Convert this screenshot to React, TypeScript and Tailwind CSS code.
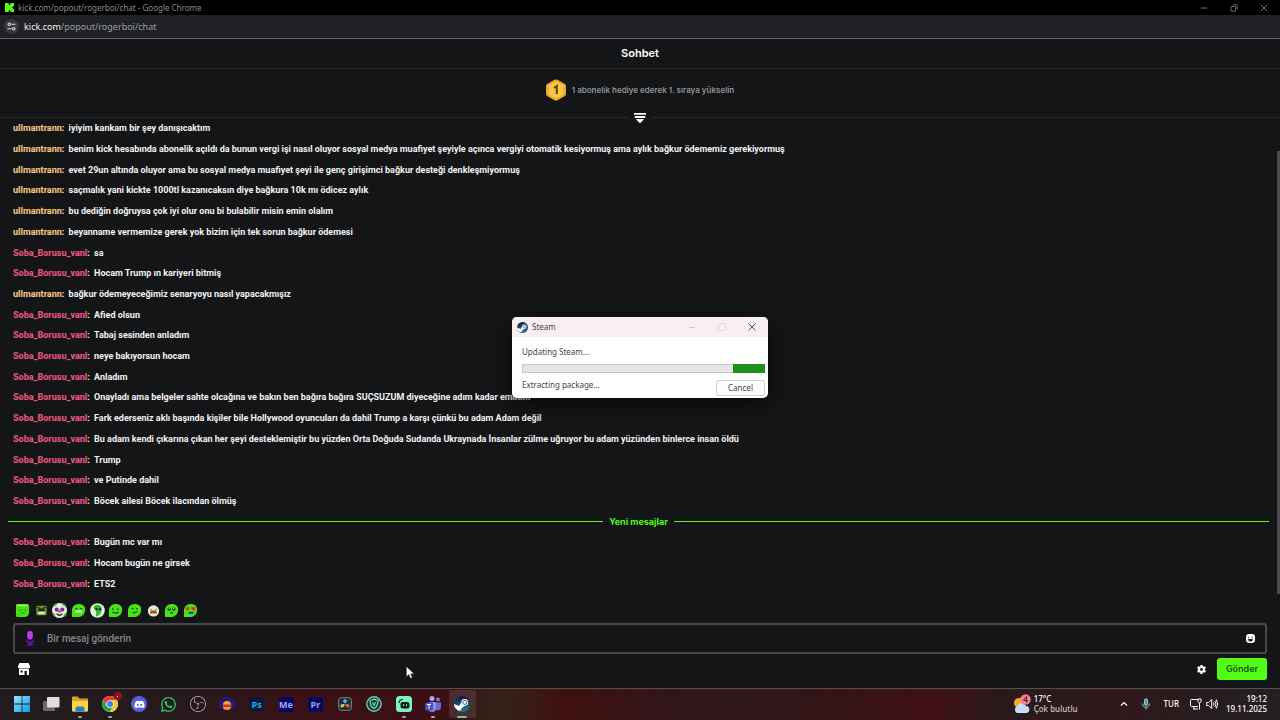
import type { ReactNode } from "react";
import { FaDiscord, FaWhatsapp } from "react-icons/fa";
import { SiObsstudio } from "react-icons/si";

type Message = { user: "ullmantrann" | "Soba_Borusu_vanl"; text: string };

const U = "ullmantrann" as const;
const S = "Soba_Borusu_vanl" as const;

const oldMessages: Message[] = [
  { user: U, text: "iyiyim kankam bir şey danışıcaktım" },
  { user: U, text: "benim kick hesabında abonelik açıldı da bunun vergi işi nasıl oluyor sosyal medya muafiyet şeyiyle açınca vergiyi otomatik kesiyormuş ama aylık bağkur ödememiz gerekiyormuş" },
  { user: U, text: "evet 29un altında oluyor ama bu sosyal medya muafiyet şeyi ile genç girişimci bağkur desteği denkleşmiyormuş" },
  { user: U, text: "saçmalık yani kickte 1000tl kazanıcaksın diye bağkura 10k mı ödicez aylık" },
  { user: U, text: "bu dediğin doğruysa çok iyi olur onu bi bulabilir misin emin olalım" },
  { user: U, text: "beyanname vermemize gerek yok bizim için tek sorun bağkur ödemesi" },
  { user: S, text: "sa" },
  { user: S, text: "Hocam Trump ın kariyeri bitmiş" },
  { user: U, text: "bağkur ödemeyeceğimiz senaryoyu nasıl yapacakmışız" },
  { user: S, text: "Afied olsun" },
  { user: S, text: "Tabaj sesinden anladım" },
  { user: S, text: "neye bakıyorsun hocam" },
  { user: S, text: "Anladım" },
  { user: S, text: "Onayladı ama belgeler sahte olcağına ve bakın ben bağıra bağıra SUÇSUZUM diyeceğine adım kadar eminim" },
  { user: S, text: "Fark ederseniz aklı başında kişiler bile Hollywood oyuncuları da dahil Trump a karşı çünkü bu adam Adam değil" },
  { user: S, text: "Bu adam kendi çıkarına çıkan her şeyi desteklemiştir bu yüzden Orta Doğuda Sudanda Ukraynada İnsanlar zülme uğruyor bu adam yüzünden binlerce insan öldü" },
  { user: S, text: "Trump" },
  { user: S, text: "ve Putinde dahil" },
  { user: S, text: "Böcek ailesi Böcek ilacından ölmüş" },
];

const newMessages: Message[] = [
  { user: S, text: "Bugün mc var mı" },
  { user: S, text: "Hocam bugün ne girsek" },
  { user: S, text: "ETS2" },
];

function ChatRow({ user, text }: Message) {
  return (
    <li className="flex flex-1 items-center px-[13px] whitespace-nowrap">
      <p>
        <span className={user === U ? "font-extrabold text-[#f2c27c]" : "font-extrabold text-[#e9557f]"}>{user}</span>
        <span className="mr-[2px] font-bold">: </span>
        {text}
      </p>
    </li>
  );
}

function WindowButtons() {
  return (
    <div className="flex items-center text-[#8b8b8b]">
      <button aria-label="Minimize" className="flex w-[30px] justify-center">
        <svg viewBox="0 0 10 10" className="size-2" stroke="currentColor" fill="none"><path d="M1 5h8" /></svg>
      </button>
      <button aria-label="Restore" className="flex w-[30px] justify-center">
        <svg viewBox="0 0 10 10" className="size-2" stroke="currentColor" fill="none"><rect x="1" y="3" width="6" height="6" rx="1" /><path d="M3.500 1H8q1 0 1 1v4.500" /></svg>
      </button>
      <button aria-label="Close" className="flex w-[30px] justify-center">
        <svg viewBox="0 0 10 10" className="size-2" stroke="currentColor" fill="none"><path d="M1 1l8 8M9 1l-8 8" /></svg>
      </button>
    </div>
  );
}

const face = "M3 1h10q2 0 2 2v6.500q0 5.500-5.500 5.500H3q-2 0-2-2V3q0-2 2-2z";
const bubble = "M8 1c5 0 7.500 2.500 7 7S11.500 15 7 15H1V8C1 4 4 1 8 1z";

const emotes: { name: string; art: ReactNode }[] = [
  { name: "Sleepy", art: <><path d={face} fill="#4be01c" /><path d="M1.500 2.500h12" stroke="#9af45c" strokeWidth="1.500" /><path d="M4 7.500h3M9 7.500h3M6 10.500h4" stroke="#2fa01f" strokeWidth="1.200" /></> },
  { name: "Frog", art: <><rect x="2.500" y="3" width="11" height="10" rx="1.500" fill="#6c9b32" /><path d="M3.500 4.500l4 2M12.500 4.500l-4 2" stroke="#1c2b12" strokeWidth="1.500" /><rect x="4.500" y="6.500" width="7" height="2" fill="#17220f" /><rect x="4.500" y="9.500" width="7" height="2.500" fill="#d4e5b1" /></> },
  { name: "Clown", art: <><circle cx="8" cy="8" r="8" fill="#e3efe2" /><path d="M2 3l3-2M14 3l-3-2M1 11l2 3M15 11l-2 3" stroke="#41c52b" strokeWidth="2" /><circle cx="5" cy="7" r="2.200" fill="#7b2bae" /><circle cx="11" cy="7" r="2.200" fill="#7b2bae" /><circle cx="8" cy="9" r="1.500" fill="#e33b4e" /><path d="M5 11.500q3 3 6 0" stroke="#222" strokeWidth="1.500" fill="none" /></> },
  { name: "Grin", art: <><path d={bubble} fill="#4be01c" /><path d="M4.500 6h2.500M9.500 6H12" stroke="#125e10" strokeWidth="1.200" /><path d="M4.500 9h7" stroke="#d9ffd0" strokeWidth="2" /></> },
  { name: "Scream", art: <><circle cx="8" cy="8" r="7.800" fill="#e2f0df" /><path d="M4.500 3c5-3 9 1 8 5s-4 6.500-6 6c-1-1 1-3 0-5s-4-3-2-6z" fill="#31b923" /><circle cx="7" cy="6.500" r="1.300" fill="#123" /><circle cx="10.500" cy="6.500" r="1.300" fill="#123" /></> },
  { name: "Smile", art: <><path d={bubble} fill="#4be01c" /><path d="M5 5.500v2M10.500 5.500v2M4.500 9.500q3.500 2.500 7 0" stroke="#125e10" strokeWidth="1.300" fill="none" /></> },
  { name: "Smirk", art: <><path d={bubble} fill="#4be01c" /><path d="M5 5.500l2 1M9.500 6h2M6 10q3 1 5-1" stroke="#125e10" strokeWidth="1.300" fill="none" /></> },
  { name: "Mad", art: <><circle cx="8" cy="8.500" r="6" fill="#e9efd0" /><path d="M4.500 6.500l2 1M11.500 6.500l-2 1" stroke="#6d8a3a" /><rect x="4.500" y="8" width="7" height="4" rx="1.500" fill="#b34a30" /><path d="M5.500 11.800h5" stroke="#fff" /></> },
  { name: "Pleading", art: <><path d={bubble} fill="#4be01c" /><circle cx="5.500" cy="6.500" r="1.800" fill="#0d3b0c" /><circle cx="10.500" cy="6.500" r="1.800" fill="#0d3b0c" /><circle cx="5.500" cy="6" r=".6" fill="#fff" /><circle cx="10.500" cy="6" r=".6" fill="#fff" /><path d="M6.500 11q1.500-1.500 3 0" stroke="#125e10" strokeWidth="1.200" fill="none" /></> },
  { name: "Love", art: <><path d={bubble} fill="#4be01c" /><path d="M2.500 4.500h4.500v2L5 8.500 2.500 6.500zM9 4.500h4.500v2L11 8.500 9 6.500z" fill="#e3342b" /><rect x="6" y="9.500" width="5" height="2" fill="#173e12" /><path d="M7.500 11.500h3v2q-1.500 1.500-3 0z" fill="#49b9e8" /></> },
];

function SteamLogo({ id, className }: { id: string; className: string }) {
  return (
    <svg viewBox="0 0 20 20" className={className}>
      <defs>
        <linearGradient id={id} x1="0" y1="0" x2="0" y2="1"><stop stopColor="#111b3a" /><stop offset="1" stopColor="#1c7fa6" /></linearGradient>
        <clipPath id={`${id}-clip`}><circle cx="10" cy="10" r="10" /></clipPath>
      </defs>
      <circle cx="10" cy="10" r="10" fill={`url(#${id})`} />
      <g clipPath={`url(#${id}-clip)`}>
        <path d="M-1 9.500l7.200 3 3-4.300a4.200 4.200 0 1 1 4.300 4.100l-4 3a3.200 3.200 0 0 1-6.200.9L-1 14z" fill="#fff" />
      </g>
      <circle cx="13.400" cy="8" r="2.500" fill="none" stroke="#17345a" strokeWidth="1" />
    </svg>
  );
}

function SteamDialog() {
  return (
    <section role="dialog" aria-label="Steam" className="absolute top-[317px] left-1/2 w-64 -translate-x-1/2 overflow-hidden rounded-[5px] bg-white font-['Noto_Sans','Open_Sans',sans-serif] text-[8px] leading-3 text-[#444] shadow-[0_6px_22px_rgba(0,0,0,0.6)]">
      <header className="flex h-5 items-center justify-between bg-[#f9eff1] pr-px pl-[5px]">
        <div className="flex items-center gap-1">
          <SteamLogo id="steam-title" className="size-[11px]" />
          <h2>Steam</h2>
        </div>
        <div className="flex items-center">
          <button aria-label="Minimize" className="flex w-[30px] justify-center text-[#cfc4c7]">
            <svg viewBox="0 0 8 8" className="size-2" stroke="currentColor"><path d="M1 4.500h6" /></svg>
          </button>
          <button aria-label="Maximize" className="flex w-[30px] justify-center text-[#e2d6d9]">
            <svg viewBox="0 0 8 8" className="size-2" stroke="currentColor" fill="none"><rect x=".5" y=".5" width="7" height="7" rx="1" /></svg>
          </button>
          <button aria-label="Close" className="flex w-[30px] justify-center text-[#555]">
            <svg viewBox="0 0 8 8" className="size-2" stroke="currentColor"><path d="M.5.5l7 7M7.500.5l-7 7" /></svg>
          </button>
        </div>
      </header>
      <div className="pt-[9px] pr-[3px] pb-[2px] pl-[10px]">
        <p>Updating Steam...</p>
        <div role="progressbar" aria-label="Updating Steam" className="mt-[6px] flex h-[9px] justify-end border border-[#c6c6c6] bg-[#e5e5e5]">
          <span className="-my-px -mr-px w-8 bg-[#1d8f1d]" />
        </div>
        <div className="mt-[6px] flex items-start justify-between">
          <p>Extracting package...</p>
          <button className="mt-px h-4 w-[49px] rounded-[2px] border border-[#d0d0d0] bg-[#fdfdfd] leading-3">Cancel</button>
        </div>
      </div>
    </section>
  );
}

function AdobeTile({ label, className }: { label: string; className: string }) {
  return <span className={`flex size-[15px] items-center justify-center rounded-[3px] font-['Open_Sans',sans-serif] text-[9px] leading-none font-bold ${className}`}>{label}</span>;
}

const apps: { name: string; icon: ReactNode; running?: boolean; active?: boolean }[] = [
  { name: "Start", icon: <svg viewBox="0 0 16 16" className="size-4"><defs><linearGradient id="win" x1="0" y1="0" x2="1" y2="1"><stop stopColor="#8fe4fd" /><stop offset="1" stopColor="#1399e3" /></linearGradient></defs><path d="M0 0h7.600v7.600H0zM8.400 0H16v7.600H8.400zM0 8.400h7.600V16H0zM8.400 8.400H16V16H8.400z" fill="url(#win)" /></svg> },
  { name: "Task view", icon: <svg viewBox="0 0 18 16" className="h-4 w-[18px]"><rect x="1" y="5" width="12" height="10" rx="1" fill="#6b6869" /><rect x="5" y="1" width="12.500" height="10.500" rx="1" fill="#dededf" /></svg> },
  { name: "File Explorer", running: true, icon: <svg viewBox="0 0 18 16" className="h-4 w-[18px]"><path d="M1 1.500q0-1 1-1h4.500l2 2H16q1 0 1 1V14q0 1.500-1.500 1.500h-13Q1 15.500 1 14z" fill="#dc9f1f" /><path d="M1 5h16v9q0 1.500-1.500 1.500h-13Q1 15.500 1 14z" fill="#fbd24c" /><path d="M4.500 15.500V12q0-1.500 1.500-1.500h6q1.500 0 1.500 1.500v3.500z" fill="#2181c4" /></svg> },
  { name: "Google Chrome", running: true, icon: <span className="relative"><svg viewBox="0 0 16 16" className="size-4"><circle cx="8" cy="8" r="8" fill="#fff" /><path d="M8 4.200h6.950A8 8 0 0 0 1.100 4L4.700 9.900A3.800 3.800 0 0 1 8 4.200z" fill="#e53d30" /><path d="M4.700 9.900L1.100 4A8 8 0 0 0 8 16l3.300-6.100a3.800 3.800 0 0 1-6.600 0z" fill="#27a14c" /><path d="M11.300 9.900L8 16a8 8 0 0 0 6.950-11.800H8a3.800 3.800 0 0 1 3.300 5.700z" fill="#fbc724" /><circle cx="8" cy="8" r="3" fill="#3d80ee" /></svg><span className="absolute -top-1 -right-1 flex size-2 items-center justify-center rounded-full bg-[#8e1420]"><span className="size-px bg-white" /></span></span> },
  { name: "Discord", icon: <span className="flex size-4 items-center justify-center rounded-full bg-[#5560dc] text-white"><FaDiscord className="size-[11px]" /></span> },
  { name: "WhatsApp", icon: <FaWhatsapp className="size-[17px] text-[#27d366]" /> },
  { name: "OBS Studio", icon: <SiObsstudio className="size-4 text-[#b9b5b6]" /> },
  { name: "Fruit", icon: <svg viewBox="0 0 18 16" className="h-4 w-[18px]"><path d="M1 12C0 6 3 1 9 1s9 5 8 11c-1 3-3 1-4-2H5c-1 3-3 5-4 2z" fill="#1f1779" /><path d="M5 9q0-4 4-4t4 4z" fill="#f5a832" /><rect x="4.500" y="8.500" width="9" height="2.500" fill="#c8372d" /><path d="M5 11h8q0 3-4 3t-4-3z" fill="#f39a36" /></svg> },
  { name: "Photoshop", icon: <AdobeTile label="Ps" className="bg-[#061c34] text-[#35a6f4]" /> },
  { name: "Media Encoder", icon: <AdobeTile label="Me" className="bg-[#06065f] text-[#a6a3fa]" /> },
  { name: "Premiere Pro", icon: <AdobeTile label="Pr" className="bg-[#06065f] text-[#a6a3fa]" /> },
  { name: "DaVinci Resolve", icon: <svg viewBox="0 0 16 16" className="size-[14px]"><rect x=".7" y=".7" width="14.600" height="14.600" rx="3" fill="#202d35" stroke="#8b9195" /><path d="M8 7.500C4.500 5 6 2.500 8 2.500s3.500 2.500 0 5z" fill="#55b9d9" /><path d="M7.600 8.300c0 4-3.200 4.500-4.500 3s.3-4.500 4.500-3z" fill="#b8d044" /><path d="M8.400 8.300c0 4 3.200 4.500 4.500 3s-.3-4.500-4.500-3z" fill="#e25559" /></svg> },
  { name: "Security", icon: <svg viewBox="0 0 16 16" className="size-4" fill="none"><circle cx="8" cy="8" r="7.200" fill="#123b36" stroke="#77c5a8" strokeWidth="1.400" /><path d="M4.200 4.500L8 3.200l4 1.300c0 4-1 6.500-4 8-3-1.500-4-4-3.800-8z" stroke="#72d6ae" strokeWidth="1.300" /><path d="M6.500 6.200l1.500 3 1.700-3" stroke="#72d6ae" strokeWidth="1.300" /></svg> },
  { name: "Streamlabs", running: true, icon: <svg viewBox="0 0 16 16" className="size-4"><rect width="16" height="16" rx="3.500" fill="#7ef3c4" /><path d="M3 7q0-3.500 4-3.500" stroke="#10221e" strokeWidth="1.200" fill="none" /><rect x="4.500" y="6" width="9" height="6.500" rx="2" fill="#10221e" /><path d="M7.500 8.200v2M10.500 8.200v2" stroke="#7ef3c4" /></svg> },
  { name: "Teams", running: true, icon: <svg viewBox="0 0 16 16" className="size-4"><circle cx="7" cy="2.500" r="2.500" fill="#a7a9f5" /><circle cx="13" cy="3.500" r="2" fill="#8078e0" /><path d="M4 6h7v6q0 4-4 4t-4-4z" fill="#8b8df0" /><path d="M11 6.500h5V11q0 3-3.500 3.500L11 14z" fill="#6f68dc" /><rect y="6.500" width="8" height="8" rx="1.500" fill="#4650b8" /><path d="M2 8.500h4M4 8.500V13" stroke="#fff" /></svg> },
  { name: "Steam", active: true, icon: <SteamLogo id="steam-task" className="size-4" /> },
];

function Taskbar() {
  return (
    <footer className="flex h-8 shrink-0 items-stretch justify-between border-t border-[#555052] bg-[linear-gradient(90deg,#211c1e_0%,#27191c_15%,#3a1116_23%,#3a1014_35%,#33231a_39%,#40100f_44%,#331519_52%,#2f171c_58%,#361415_66%,#401014_73%,#2a191b_78%,#2e191b_88%,#242022_100%)] pb-px font-['Noto_Sans','Open_Sans',sans-serif] text-white">
      <nav aria-label="Taskbar" className="ml-2 flex w-[468px] items-center justify-between">
        {apps.map((app) => (
          <button key={app.name} aria-label={app.name} className={app.active ? "relative flex h-7 w-[27px] items-center justify-center rounded-[3px] bg-white/10" : "relative flex h-7 w-[27px] items-center justify-center"}>
            {app.icon}
            {app.running && <span className="absolute bottom-0 h-[2px] w-1 rounded-full bg-[#aaa3a4]" />}
            {app.active && <span className="absolute bottom-0 h-[2px] w-[10px] rounded-full bg-[#6fc4a6]" />}
          </button>
        ))}
      </nav>
      <div className="flex items-center pr-[13px] text-[8px] leading-[10px] font-medium">
        <button className="mr-[42px] flex items-center gap-[3px] text-left">
          <svg viewBox="0 0 18 20" className="h-5 w-[18px]">
            <circle cx="6" cy="9" r="5" fill="#f5a934" />
            <path d="M4 19a4 4 0 0 1 0-7 5 5 0 0 1 9 0 3.600 3.600 0 0 1 1 7z" fill="#c7dcfb" />
            <circle cx="12.500" cy="5.500" r="5.200" fill="#f0808b" />
            <path d="M13.500 8.500v-6l-3 4h4.500" stroke="#57202a" fill="none" />
          </svg>
          <span className="flex flex-col"><span>17°C</span><span className="text-[#c9c3c4]">Çok bulutlu</span></span>
        </button>
        <button aria-label="Show hidden icons" className="mr-[13px]"><svg viewBox="0 0 8 8" className="size-2" fill="none" stroke="currentColor" strokeWidth="1.200"><path d="M1 5.500l3-3 3 3" /></svg></button>
        <button aria-label="Microphone" className="mr-[13px]"><svg viewBox="0 0 10 12" className="h-3 w-[10px]" fill="none" stroke="#9fd7dc"><rect x="3.500" y=".8" width="3" height="6.500" rx="1.500" fill="#4c9ba5" /><path d="M1.500 5.500c0 5 7 5 7 0M5 9.500v2" /></svg></button>
        <button className="mr-[11px]">TUR</button>
        <button aria-label="Network and volume" className="mr-2 flex items-center gap-1">
          <svg viewBox="0 0 12 12" className="size-3" fill="none" stroke="currentColor"><path d="M8 1.500H1.500q-1 0-1 1v5q0 1 1 1H8M3 11h5M4 8.500V11M9.500 5v6.500M8 1h3v2.500q0 1-1.500 1.500Q8 4.500 8 3.500z" /></svg>
          <svg viewBox="0 0 12 12" className="size-3" fill="none" stroke="currentColor"><path d="M.7 4.500h2l3-3v9l-3-3h-2zM7.500 4.500q1 1.500 0 3M9 3q2 3 0 6M10.300 1.500q2.700 4.500 0 9" /></svg>
        </button>
        <time className="flex flex-col text-right"><span>19:12</span><span>19.11.2025</span></time>
      </div>
    </footer>
  );
}

export default function App() {
  return (
    <div className="relative flex h-screen min-h-[680px] flex-col overflow-hidden bg-[#141517] font-['Inter',sans-serif] text-white">
      <header className="flex h-[15px] shrink-0 items-center justify-between bg-black pr-px">
        <div className="flex items-center gap-1 pl-[5px] font-['Noto_Sans','Open_Sans',sans-serif] text-[8px] leading-3 text-[#8a8a8a]">
          <svg viewBox="0 0 9 9" className="size-[9px]" fill="#53fc18"><path d="M0 0h3.800v2h1V1h1V0H9v3.300H8v1H7v.6h1v1h1V9H5.800V8h-1V7h-1v2H0z" /></svg>
          <span>kick.com/popout/rogerboi/chat - Google Chrome</span>
        </div>
        <WindowButtons />
      </header>
      <div className="flex h-6 shrink-0 items-center gap-[5px] border-b border-[#626364] bg-[#202124] pl-1 font-['Noto_Sans','Open_Sans',sans-serif] text-[9px] leading-3 text-[#9b9ea2]">
        <button aria-label="Site information" className="flex size-[15px] items-center justify-center rounded-full bg-[#37383b] text-[#dcdcdc]">
          <svg viewBox="0 0 10 10" className="size-[9px]" fill="none" stroke="currentColor" strokeWidth="1.200"><circle cx="2.500" cy="2.500" r="1.400" /><path d="M5 2.500h4.500M.5 7.500H5" /><circle cx="7.500" cy="7.500" r="1.400" /></svg>
        </button>
        <p><span className="text-[#f1f1f1]">kick.com</span>/popout/rogerboi/chat</p>
      </div>

      <main className="flex min-h-0 flex-1 flex-col">
        <h1 className="flex h-[30px] shrink-0 items-center justify-center border-b border-[#27282b] text-[11px] font-semibold">Sohbet</h1>
        <div className="flex h-11 shrink-0 items-center justify-center gap-[6px] pb-[2px] text-[8px] font-semibold text-[#8f9496]">
          <svg viewBox="0 0 20 22" className="h-[22px] w-5">
            <path d="M8.500.8q1.500-.8 3 0l7 4Q20 5.600 20 7v8q0 1.400-1.500 2.200l-7 4q-1.500.8-3 0l-7-4Q0 16.400 0 15V7q0-1.400 1.500-2.200z" fill="#e9a92c" />
            <path d="M9 3q1-.6 2 0l5.500 3.200q1 .6 1 1.600v6.400q0 1-1 1.600L11 19q-1 .6-2 0l-5.500-3.200q-1-.6-1-1.600V7.800q0-1 1-1.600z" fill="#f8c948" />
            <path d="M8 9l2.800-2v8" stroke="#64400c" strokeWidth="2" fill="none" />
          </svg>
          <p>1 abonelik hediye ederek 1. sıraya yükselin</p>
        </div>
        <div className="flex h-[9px] shrink-0 items-center gap-[6px]">
          <span className="h-px flex-1 bg-[#27282b]" />
          <button aria-label="Expand leaderboard"><svg viewBox="0 0 12 10" className="h-[10px] w-3" fill="#fff"><path d="M0 0h12v1.700H0zM.8 2.900h10.400v2H.8zM2 6h8L7 9.500q-1 .8-2 0z" /></svg></button>
          <span className="h-px flex-1 bg-[#27282b]" />
        </div>

        <div className="-mt-[4px] flex min-h-0 flex-1">
          <ul className="flex min-w-0 flex-1 flex-col font-['Roboto','Inter',sans-serif] text-[9px] leading-[14px] font-bold text-[#f2f2f2]">
            {oldMessages.map((m, i) => <ChatRow key={i} {...m} />)}
            <li className="flex flex-1 items-center gap-[6px] pr-2 pl-2 font-['Inter',sans-serif] font-bold text-[#53fc18]">
              <span className="flex-1 border-t border-[#53fc18]" />Yeni mesajlar<span className="flex-1 border-t border-[#53fc18]" />
            </li>
            {newMessages.map((m, i) => <ChatRow key={i} {...m} />)}
          </ul>
          <div className="mt-[33px] w-[3px] bg-[#4b4c4e]" />
        </div>

        <div className="flex h-[29px] shrink-0 items-center pt-1 pl-[15px]">
          <div className="flex w-[183px] items-center justify-between">
            {emotes.map((e) => (
              <button key={e.name} aria-label={e.name}>
                <svg viewBox="0 0 16 16" className="size-[15px]">{e.art}</svg>
              </button>
            ))}
          </div>
        </div>
        <div className="mr-[13px] ml-[13px] flex h-[31px] shrink-0 items-center rounded-[3px] border-2 border-[#47484b] pr-[10px] pl-[9px]">
          <svg viewBox="0 0 12 16" className="mr-[11px] h-[15px] w-3"><rect x="3" y="0" width="6" height="9" rx="3" fill="#c23be8" /><path d="M1 7c0 6 10 6 10 0v2c0 2-2 3.500-4 3.800V14h2.500v1.500h-7V14H5v-1.200C3 12.500 1 11 1 9z" fill="#7d12b5" /></svg>
          <input aria-label="Bir mesaj gönderin" placeholder="Bir mesaj gönderin" className="min-w-0 flex-1 bg-transparent font-['Roboto','Inter',sans-serif] text-[10px] font-medium outline-none placeholder:text-[#85888b]" />
          <button aria-label="Emotes"><svg viewBox="0 0 10 10" className="size-[9px]"><rect width="10" height="10" rx="3.500" fill="#fff" /><path d="M3 3v1.500M7 3v1.500M2.500 6h5q-.5 2-2.500 2t-2.500-2z" fill="#141517" stroke="#141517" strokeWidth=".9" /></svg></button>
        </div>
        <div className="flex h-[34px] shrink-0 items-center justify-between pr-[13px] pb-1 pl-[18px]">
          <button aria-label="Shop"><svg viewBox="0 0 12 12" className="h-3 w-[12px]" fill="#fff"><path d="M1.500 0h9L12 3v2H0V3z" /><path fillRule="evenodd" d="M1 5.500h10V12H8.800V8H6.500v4H1zM2.600 7.500v2h2v-2z" /></svg></button>
          <div className="flex items-center gap-[11px]">
            <button aria-label="Chat settings"><svg viewBox="0 0 10 10" className="size-[9px]" fill="#fff"><path fillRule="evenodd" d="M3.900 0h2.200l.3 1.400 1 .6 1.400-.5 1.100 1.900-1.100 1v1.200l1.100 1-1.100 1.900L7.400 8l-1 .6L6.100 10H3.900l-.3-1.400-1-.6-1.400.5L.1 6.600l1.100-1V4.400l-1.100-1 1.100-1.900L2.600 2l1-.6zM5 3.400a1.600 1.600 0 1 0 0 3.200 1.600 1.600 0 0 0 0-3.200z" /></svg></button>
            <button className="h-[22px] w-[50px] rounded-[3px] bg-[#53fc18] text-[9px] font-semibold text-[#185908]">Gönder</button>
          </div>
        </div>
      </main>

      <Taskbar />
      <SteamDialog />
      <svg viewBox="0 0 10 14" className="pointer-events-none absolute top-[666px] left-[406px] h-[13px] w-[9px]"><path d="M.5.5v11l2.700-2.400L5 13.500l2-1-1.900-4h4z" fill="#fff" stroke="#333" strokeWidth=".5" /></svg>
    </div>
  );
}
